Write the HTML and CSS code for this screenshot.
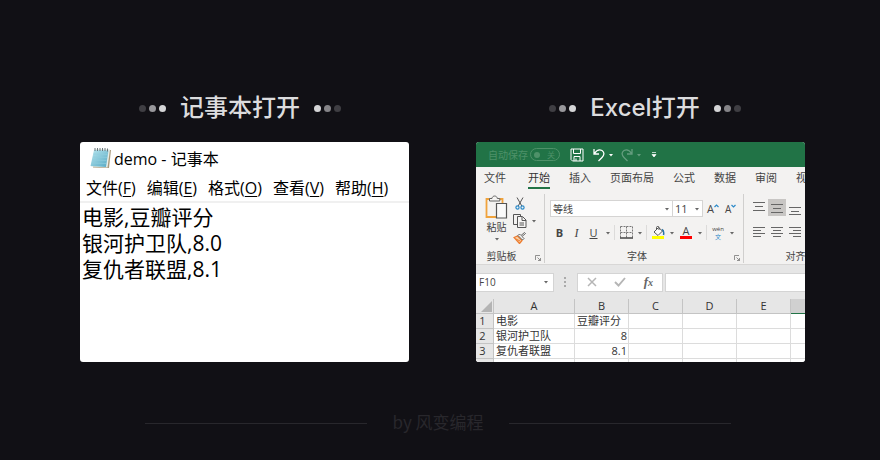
FILE: index.html
```html
<!DOCTYPE html>
<html lang="zh-CN">
<head>
<meta charset="utf-8">
<meta name="viewport" content="width=device-width, initial-scale=1">
<title>记事本打开 / Excel打开</title>
<link rel="stylesheet" href="styles.css">
</head>
<body>
<svg class="defs" aria-hidden="true">
  <symbol id="caret" viewBox="0 0 6 4"><path d="M1 1h4L3 3.500z" fill="currentColor"/></symbol>
  <symbol id="launcher" viewBox="0 0 6 6"><path d="M.5 5V.5H5M2.500 2.500l3 3M5.500 3v2.500H3" fill="none" stroke="#777" stroke-width=".8"/></symbol>
</svg>
<main class="compare">
  <figure class="pane pane-left">
    <figcaption class="caption">
      <span class="dots"><i></i><i></i><i></i></span>
      <span>记事本打开</span>
      <span class="dots dots-end"><i></i><i></i><i></i></span>
    </figcaption>
    <section class="window notepad">
      <header class="note-title">
        <svg width="22" height="22" viewBox="0 0 22 22" aria-hidden="true">
          <defs><linearGradient id="sheet" x1="0" y1="0" x2="1" y2="1"><stop offset="0" stop-color="#b9e6ef"/><stop offset="1" stop-color="#55a9c4"/></linearGradient></defs>
          <path d="M5 2.500 21 3 19 21 3 20.500z" fill="#a99a7c"/>
          <path d="M4.500 2 20 2.500 17.500 20.500 1 19.500z" fill="#e8eee9"/>
          <path d="M4 3 18.500 3.500 16 20 .5 19z" fill="url(#sheet)"/>
          <path d="M3.500 7l14 .5M3 10l14 .5M2.500 13l14 .5M2 16l14 .5" stroke="#8fcddd" stroke-width=".7"/>
          <path d="M5 1v3M7.500 1v3M10 1v3M12.500 1v3M15 1v3M17.500 1.500v3" stroke="#69777d" stroke-width="1"/>
        </svg>
        <span>demo - 记事本</span>
      </header>
      <nav class="note-menu">
        <button>文件(<u>F</u>)</button>
        <button>编辑(<u>E</u>)</button>
        <button>格式(<u>O</u>)</button>
        <button>查看(<u>V</u>)</button>
        <button>帮助(<u>H</u>)</button>
      </nav>
      <textarea class="note-text" aria-label="demo" spellcheck="false">电影,豆瓣评分
银河护卫队,8.0
复仇者联盟,8.1</textarea>
    </section>
  </figure>

  <figure class="pane pane-right">
    <figcaption class="caption">
      <span class="dots"><i></i><i></i><i></i></span>
      <span>Excel打开</span>
      <span class="dots dots-end"><i></i><i></i><i></i></span>
    </figcaption>
    <section class="window excel">
      <header class="xl-title">
        <span class="autosave">自动保存</span>
        <button class="switch" disabled><span class="knob"></span>关</button>
        <button class="quick" aria-label="保存"><svg width="14" height="14" viewBox="0 0 14 14"><path d="M1 1h12v12H2.500L1 11.500zM3.500 1v4.500h7V1M4 13V8.500h6V13M6 13v-2.500" fill="none" stroke="#fff"/></svg></button>
        <button class="quick" aria-label="撤消"><svg width="12" height="14" viewBox="0 0 12 14"><path d="M1 1v5h5M1.500 5.500C4 1.500 7 1.500 9 2.500c3 2 2 5 0 7L5.500 13" fill="none" stroke="#fff" stroke-width="1.300"/></svg></button>
        <svg class="caret light" width="6" height="4"><use href="#caret"/></svg>
        <button class="quick faded" aria-label="恢复"><svg width="12" height="14" viewBox="0 0 12 14"><path d="M11 1v5H6M10.500 5.500C8 1.500 5 1.500 3 2.500c-3 2-2 5 0 7L6.500 13" fill="none" stroke="#fff" stroke-width="1.300"/></svg></button>
        <svg class="caret light faded" width="6" height="4"><use href="#caret"/></svg>
        <button class="quick more" aria-label="自定义"><svg width="6" height="6" viewBox="0 0 6 6"><path d="M1 .5h4M1 2.500h4L3 5z" fill="#fff" stroke="#fff" stroke-width=".7"/></svg></button>
      </header>
      <nav class="tabs">
        <button class="file">文件</button>
        <button class="active">开始</button>
        <button>插入</button>
        <button>页面布局</button>
        <button>公式</button>
        <button>数据</button>
        <button>审阅</button>
        <button>视图</button>
      </nav>
      <div class="ribbon">
        <div class="group clipboard">
          <div class="group-body">
            <button class="paste">
              <svg width="23" height="25" viewBox="0 0 23 25" aria-hidden="true">
                <path d="M5 4H1.500v18H11M14 4h3.500v4" fill="none" stroke="#f0a33c" stroke-width="1.800"/>
                <path d="M4.500 6V3.500H7C7.300.2 12 .2 12.300 3.500h2.500V6z" fill="#f5f4f2" stroke="#666"/>
                <path d="M11.500 8.500h10v14.500h-10z" fill="#fafafa" stroke="#555" stroke-width="1.200"/>
              </svg>
              <span>粘贴</span>
              <svg class="caret" width="6" height="4"><use href="#caret"/></svg>
            </button>
            <div class="clip-tools">
              <button aria-label="剪切"><svg width="10" height="13" viewBox="0 0 10 13"><path d="M2 .5 6.800 9M8 .5 3.200 9" stroke="#555" fill="none"/><circle cx="2.500" cy="10.500" r="1.600" fill="none" stroke="#2b8ac9" stroke-width="1.200"/><circle cx="7.500" cy="10.500" r="1.600" fill="none" stroke="#2b8ac9" stroke-width="1.200"/></svg></button>
              <button aria-label="复制"><svg width="14" height="14" viewBox="0 0 14 14"><path d="M4.500 10.500h-4v-10h7v2" fill="none" stroke="#555"/><path d="M4.500 2.500h5l3.500 3.500v7.500H4.500zM9 3v3.500h4M6.500 9h4.500M6.500 11h4.500" fill="#f7f6f5" stroke="#555"/></svg><svg class="caret" width="6" height="4"><use href="#caret"/></svg></button>
              <button aria-label="格式刷"><svg width="13" height="12" viewBox="0 0 13 12"><path d="M1 5.500 4.500 4 9 8.500 6.500 11.500z" fill="#f8d2a8" stroke="#ed7d31" stroke-width="1.300"/><path d="M3 7l4 2" stroke="#ed7d31"/><path d="M5 3.500 9.500 8l1.500-1.500L9 4.500l3.500-3L11.500.5 8 3.500 6.500 2z" fill="#f5f4f2" stroke="#555" stroke-width=".9"/></svg></button>
            </div>
          </div>
          <div class="group-label"><span>剪贴板</span><svg class="launch" width="6" height="6"><use href="#launcher"/></svg></div>
        </div>
        <div class="group font">
          <div class="group-body font-body">
            <div class="font-row">
              <label class="pick pick-font"><select aria-label="字体"><option>等线</option></select><svg class="caret" width="6" height="4"><use href="#caret"/></svg></label>
              <label class="pick pick-size"><select aria-label="字号"><option>11</option></select><svg class="caret" width="6" height="4"><use href="#caret"/></svg></label>
              <button class="grow">A<svg width="5" height="4" viewBox="0 0 5 4"><path d="M.5 3 2.500 1l2 2" fill="none" stroke="#2b8ac9" stroke-width="1.200"/></svg></button>
              <button class="grow shrink">A<svg width="5" height="4" viewBox="0 0 5 4"><path d="M.5 1l2 2 2-2" fill="none" stroke="#2b8ac9" stroke-width="1.200"/></svg></button>
            </div>
            <div class="font-row format-row">
              <button class="tool"><b>B</b></button>
              <button class="tool"><em>I</em></button>
              <button class="tool"><u>U</u></button>
              <button class="drop" aria-label="下划线"><svg class="caret" width="6" height="4"><use href="#caret"/></svg></button>
              <span class="rule"></span>
              <button class="tool wide" aria-label="边框"><svg width="13" height="13" viewBox="0 0 13 13"><path d="M.5.5h12v11M.5.5v11M6.500.5v11M.5 6.500h12" fill="none" stroke="#777" stroke-dasharray="2 1"/><path d="M0 12h13" stroke="#444" stroke-width="1.300"/></svg></button>
              <button class="drop" aria-label="边框选项"><svg class="caret" width="6" height="4"><use href="#caret"/></svg></button>
              <span class="rule"></span>
              <button class="tool wide" aria-label="填充颜色"><svg width="13" height="13" viewBox="0 0 13 13"><path d="M2 6 6.500 1.500l4 3.500L6 9.500zM4.500 4V1.500C4.500 0 7 0 7 1.500V4" fill="#fafafa" stroke="#555"/><path d="M10 3.500c2 1 2 3 1.500 5.500" fill="none" stroke="#2774a8" stroke-width="1.500"/><path d="M0 10h12v3H0z" fill="#ff0"/></svg></button>
              <button class="drop" aria-label="填充选项"><svg class="caret" width="6" height="4"><use href="#caret"/></svg></button>
              <button class="tool wide color">A</button>
              <button class="drop" aria-label="字体颜色"><svg class="caret" width="6" height="4"><use href="#caret"/></svg></button>
              <span class="rule"></span>
              <button class="tool wide pinyin"><span>wén</span><span class="han">文</span></button>
              <button class="drop" aria-label="拼音"><svg class="caret" width="6" height="4"><use href="#caret"/></svg></button>
            </div>
          </div>
          <div class="group-label"><span>字体</span><svg class="launch" width="6" height="6"><use href="#launcher"/></svg></div>
        </div>
        <div class="group align">
          <div class="group-body align-body">
            <button aria-label="顶端对齐"><svg width="12" height="16" viewBox="0 0 12 16"><path d="M0 2.500h12M2 6.500h8M0 10.500h12"/></svg></button>
            <button class="on" aria-label="垂直居中"><svg width="12" height="16" viewBox="0 0 12 16"><path d="M0 4.500h12M2 8.500h8M0 12.500h12"/></svg></button>
            <button aria-label="底端对齐"><svg width="12" height="16" viewBox="0 0 12 16"><path d="M0 7.500h12M2 11.500h8M0 14.500h12"/></svg></button>
            <button aria-label="左对齐"><svg width="12" height="12" viewBox="0 0 12 12"><path d="M0 1.500h12M0 4.500h8M0 7.500h12M0 10.500h8"/></svg></button>
            <button aria-label="居中"><svg width="12" height="12" viewBox="0 0 12 12"><path d="M0 1.500h12M2 4.500h8M0 7.500h12M2 10.500h8"/></svg></button>
            <button aria-label="右对齐"><svg width="12" height="12" viewBox="0 0 12 12"><path d="M0 1.500h12M4 4.500h8M0 7.500h12M4 10.500h8"/></svg></button>
          </div>
          <div class="group-label"><span>对齐方式</span></div>
        </div>
      </div>
      <div class="formula">
        <label class="name-box"><input aria-label="名称框" value="F10"><svg class="caret" width="6" height="4"><use href="#caret"/></svg></label>
        <svg class="grip" width="2" height="10" viewBox="0 0 2 10" aria-hidden="true"><path d="M0 0h2v2H0zM0 4h2v2H0zM0 8h2v2H0z" fill="#aaa"/></svg>
        <div class="fx-box">
          <button aria-label="取消"><svg width="10" height="10" viewBox="0 0 10 10"><path d="M1 1l8 8M9 1 1 9" stroke="#b5b5b5" stroke-width="1.500"/></svg></button>
          <button aria-label="输入"><svg width="12" height="10" viewBox="0 0 12 10"><path d="M1 5l3.500 3.500L11 1" fill="none" stroke="#b5b5b5" stroke-width="1.900"/></svg></button>
          <button class="fx">f<small>x</small></button>
        </div>
        <input class="formula-input" aria-label="编辑栏">
      </div>
      <div class="sheet">
        <table>
          <colgroup><col class="c-row"><col class="c-first"><col><col><col><col><col></colgroup>
          <thead>
            <tr><th class="corner"><svg width="11" height="11" viewBox="0 0 11 11" aria-hidden="true"><path d="M11 0v11H0z" fill="#b4b4b4"/></svg></th><th>A</th><th>B</th><th>C</th><th>D</th><th>E</th><th class="sel"></th></tr>
          </thead>
          <tbody>
            <tr><th>1</th><td>电影</td><td>豆瓣评分</td><td></td><td></td><td></td><td></td></tr>
            <tr><th>2</th><td>银河护卫队</td><td class="num">8</td><td></td><td></td><td></td><td></td></tr>
            <tr><th>3</th><td>复仇者联盟</td><td class="num">8.1</td><td></td><td></td><td></td><td></td></tr>
            <tr><th></th><td></td><td></td><td></td><td></td><td></td><td></td></tr>
          </tbody>
        </table>
      </div>
    </section>
  </figure>
</main>
<footer class="credit"><span>by 风变编程</span></footer>
</body>
</html>
```
FILE: styles.css
```css
* { box-sizing: border-box; }

body {
  margin: 0;
  min-height: 100vh;
  padding: 93px 75px 0 80px;
  background: #111015;
  font-family: "Open Sans", "Noto Sans CJK SC", sans-serif;
}

button, input, select, textarea {
  margin: 0;
  padding: 0;
  border: 0;
  background: none;
  color: inherit;
  font: inherit;
}

svg { display: block; flex: none; }
.defs { position: absolute; width: 0; height: 0; }

.compare {
  display: grid;
  grid-template-columns: minmax(0, 1fr) minmax(0, 1fr);
  gap: 67px;
}

.pane { margin: 0; }

.caption {
  display: flex;
  align-items: center;
  justify-content: center;
  gap: 14px;
  height: 30px;
  margin-bottom: 19px;
  color: #dcdcde;
  font: 500 24px/30px Inter, "Noto Sans CJK SC", sans-serif;
}
.pane-left .caption { padding-right: 9px; }
.pane-right .caption { padding-left: 9px; }

.dots { display: flex; gap: 3px; }
.dots i { width: 7px; height: 7px; border-radius: 50%; background: #d5d5d7; }
.dots i:first-child { background: #3f3e43; }
.dots i:nth-child(2) { background: #98979b; }
.dots-end i:first-child { background: #d5d5d7; }
.dots-end i:nth-child(2) { background: #858488; }
.dots-end i:last-child { background: #3f3e43; }

.window {
  display: flex;
  flex-direction: column;
  min-height: 220px;
  overflow: hidden;
  border-radius: 3px;
  background: #fff;
}

/* Notepad */
.notepad { color: #000; }
.note-title {
  display: flex;
  align-items: center;
  gap: 2px;
  height: 31px;
  padding-left: 10px;
  font-size: 16px;
}
.note-menu {
  display: flex;
  gap: 11px;
  height: 30px;
  padding-left: 6px;
  border-bottom: 2px solid #f0f0f0;
  font-size: 16px;
  white-space: nowrap;
}
.note-menu u { text-underline-offset: 2px; }
.note-text {
  flex: 1;
  width: 100%;
  padding: 1px 2px;
  outline: 0;
  resize: none;
  overflow: hidden;
  font-size: 21px;
  line-height: 26px;
}

/* Excel */
.excel {
  height: 220px;
  background: #e6e6e6;
  color: #444;
  font-size: 11px;
  line-height: 14px;
}
.caret { color: #666; }
.caret.light { color: #fff; }
.xl-title {
  display: flex;
  flex: none;
  align-items: center;
  height: 25px;
  padding-left: 12px;
  background: #217346;
}
.autosave { color: #4e9169; font-size: 10px; }
.switch {
  display: flex;
  align-items: center;
  justify-content: space-between;
  width: 30px;
  height: 13px;
  margin: 0 10px 0 2px;
  padding: 0 4px 0 3px;
  border: 1px solid #4e9169;
  border-radius: 7px;
  color: #4e9169;
  font-size: 8px;
  line-height: 11px;
}
.knob { width: 6px; height: 6px; border-radius: 50%; background: #4e9169; }
.quick { margin-right: 4px; }
.quick + .quick { margin-left: 5px; }
.caret.light + .quick { margin-left: 7px; }
.caret.light + .more { margin-left: 9px; }
.quick + .caret.light { margin-left: -1px; }
.faded { opacity: .3; }

.tabs {
  display: flex;
  flex: none;
  gap: 19px;
  height: 23px;
  padding-left: 8px;
  background: #f3f2f1;
  white-space: nowrap;
}
.tabs button { flex: none; height: 22px; padding-top: 2px; border-bottom: 2px solid transparent; }
.tabs .file { margin-right: 3px; }
.tabs .active { border-color: #217346; color: #333; }

.ribbon {
  display: flex;
  flex: none;
  height: 75px;
  border-bottom: 1px solid #d8d7d6;
  background: #f3f2f1;
}
.group {
  display: flex;
  flex: none;
  flex-direction: column;
  margin: 4px 0 1px;
  border-right: 1px solid #d0cfce;
}
.clipboard { width: 69px; }
.font { width: 199px; }
.align { width: 124px; }
.group-body { flex: 1; }
.group-label {
  display: flex;
  align-items: center;
  justify-content: center;
  position: relative;
  height: 14px;
  font-size: 10px;
}
.clipboard .group-label { padding-right: 17px; }
.font .group-label { padding-right: 14px; }
.launch { position: absolute; right: 3px; bottom: 2px; }

.clipboard .group-body { display: flex; gap: 5px; padding-left: 9px; }
.paste {
  display: flex;
  flex-direction: column;
  align-items: center;
  align-self: flex-start;
  width: 23px;
  padding-top: 1px;
  font-size: 10px;
  white-space: nowrap;
}
.paste .caret { margin-top: 3px; }
.clip-tools {
  display: flex;
  flex-direction: column;
  align-items: flex-start;
  gap: 4px;
  padding-top: 3px;
}
.clip-tools button { display: flex; align-items: center; gap: 4px; }
.clip-tools button:first-child { padding-left: 2px; }

.font-body { padding: 6px 0 0 5px; }
.font-row { display: flex; align-items: center; height: 17px; }
.format-row { margin-top: 7px; padding-left: 1px; }
.pick {
  display: flex;
  align-items: center;
  height: 17px;
  padding: 0 2px;
  border: 1px solid #d5d4d3;
  background: #fff;
}
.pick select { flex: 1; min-width: 0; appearance: none; outline: 0; font-size: 10px; }
.pick-font { width: 123px; }
.pick-size { width: 30px; border-left: 0; }
.pick-size select { font-size: 11px; }
.grow { display: flex; width: 18px; margin-left: 4px; font-size: 11px; }
.grow svg { margin-top: 2px; }
.shrink { margin-left: 0; font-size: 10px; }
.tool { display: flex; justify-content: center; width: 17px; font-size: 11px; }
.tool em { font-family: "Liberation Serif", serif; font-size: 12px; }
.wide { width: 16px; }
.drop { display: flex; justify-content: center; width: 12px; }
.rule { width: 1px; height: 15px; margin-right: 3px; background: #dcdbda; }
.color { width: 12px; height: 13px; margin: 0 2px; border-bottom: 3px solid #f00; line-height: 10px; }
.pinyin { flex-direction: column; align-items: center; font-size: 6px; line-height: 8px; }
.pinyin .han { color: #2b8ac9; }

.align-body {
  display: grid;
  grid-template-columns: repeat(3, 18px);
  grid-template-rows: 17px 17px;
  align-content: start;
  gap: 7px 0;
  padding: 5px 0 0 6px;
}
.align-body button { display: grid; place-items: center; }
.align-body path { fill: none; stroke: #666; }
.align-body .on { background: #c8c6c4; }

.formula {
  display: flex;
  flex: none;
  align-items: center;
  height: 34px;
}
.name-box, .fx-box, .formula-input {
  height: 19px;
  border: 1px solid #d4d4d4;
  background: #fff;
}
.name-box { display: flex; align-items: center; width: 78px; padding: 0 4px 0 3px; border-left: 0; }
.name-box input { flex: 1; min-width: 0; font-size: 10px; }
.grip { margin: 0 11px 0 10px; }
.fx-box { display: flex; align-items: center; justify-content: space-between; width: 86px; padding: 0 9px; }
.fx { font: italic 700 13px/14px "Liberation Serif", serif; color: #666; }
.fx small { font-size: 10px; }
.formula-input { flex: 1; min-width: 0; margin-left: 2px; border-right: 0; }

.sheet { flex: 1; min-height: 0; overflow: hidden; }
.sheet table {
  width: 369px;
  table-layout: fixed;
  border-spacing: 0;
  background: #fff;
  color: #333;
}
.c-row { width: 18px; }
.c-first { width: 81px; }
.sheet th, .sheet td {
  height: 15px;
  padding: 0 2px;
  border: solid #dcdcdc;
  border-width: 0 1px 1px 0;
  font-size: 11px;
  font-weight: 400;
  line-height: 14px;
  text-align: left;
  white-space: nowrap;
}
.sheet th { background: #e6e6e6; border-color: #c4c4c4; text-align: center; }
.sheet tbody th { padding-right: 6px; }
.sheet .corner { padding-left: 5px; }
.sheet .sel { background: #d0d0d0; border-bottom-color: #217346; }
.sheet .num { padding-right: 1px; text-align: right; }

.credit {
  display: flex;
  align-items: center;
  gap: 25px;
  margin: 50px -1px 0 65px;
  padding-right: 75px;
  color: #28272c;
  font: 17px/24px "Noto Sans CJK SC", sans-serif;
}
.credit::before, .credit::after { content: ""; flex: 1; height: 1px; background: #28272c; }
.credit span { margin-top: -2px; }
```
